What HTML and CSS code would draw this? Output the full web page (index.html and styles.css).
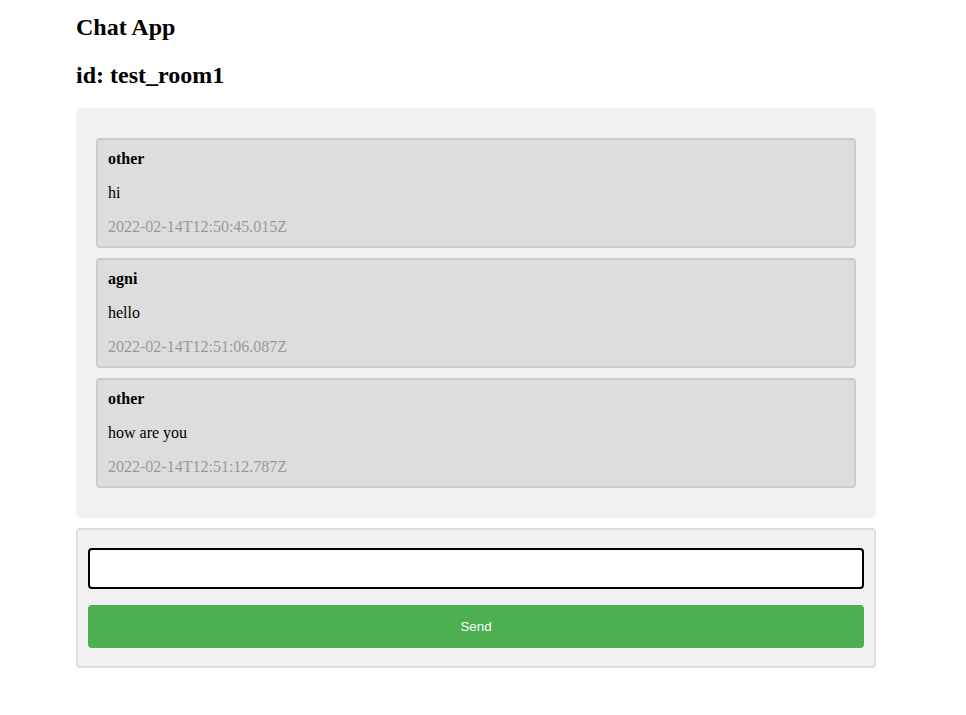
FILE: index.html
```html
<!DOCTYPE html>
<html>
<head>
<meta charset="utf-8">
<title>Chat App</title>
<link rel="stylesheet" href="styles.css">
</head>
<body>
<main class="app">
  <h2 class="title">Chat App</h2>
  <h2 class="room">id: test_room1</h2>
  <section class="chat">
    <div class="msg">
      <p class="user">other</p>
      <p class="text">hi</p>
      <p class="time">2022-02-14T12:50:45.015Z</p>
    </div>
    <div class="msg">
      <p class="user">agni</p>
      <p class="text">hello</p>
      <p class="time">2022-02-14T12:51:06.087Z</p>
    </div>
    <div class="msg">
      <p class="user">other</p>
      <p class="text">how are you</p>
      <p class="time">2022-02-14T12:51:12.787Z</p>
    </div>
  </section>
  <form class="compose">
    <input class="field" type="text" autofocus>
    <button class="send" type="button">Send</button>
  </form>
</main>
</body>
</html>
```
FILE: styles.css
```css
html, body {
  margin: 0;
  padding: 0;
  background: #fff;
}
body {
  font-family: "Liberation Serif", "Times New Roman", serif;
  font-size: 16px;
  color: #000;
}
.app {
  width: 800px;
  margin-left: 76px;
  padding-top: 1px;
}
.title, .room {
  font-size: 24px;
  font-weight: bold;
  margin: 0;
}
.title {
  margin-top: 13px;
  margin-bottom: 21px;
}
.room {
  margin-bottom: 19px;
}
.chat {
  background: #f1f1f1;
  border-radius: 5px;
  padding: 20px;
  display: flex;
  flex-direction: column;
  gap: 10px;
}
.msg {
  background: #dddddd;
  border: 2px solid #cccccc;
  border-radius: 4px;
  padding: 10px 10px;
  margin: 10px 0;
}
.msg + .msg {
  margin-top: 0;
}
.msg:not(:last-child) {
  margin-bottom: 0;
}
.msg p {
  margin: 0;
  line-height: 18px;
}
.msg p + p {
  margin-top: 16px;
}
.user {
  font-weight: bold;
}
.time {
  color: #999999;
}
.compose {
  margin-top: 10px;
  background: #f1f1f1;
  border: 2px solid #dddddd;
  border-radius: 4px;
  padding: 18px 10px 18px;
  display: flex;
  flex-direction: column;
  gap: 16px;
}
.field {
  box-sizing: border-box;
  height: 41px;
  border: 2px solid #000;
  border-radius: 4px;
  background: #fff;
  padding: 0 18px;
  font-size: 16px;
  outline: none;
  margin: 0;
  caret-color: #000;
}
.send {
  height: 43px;
  border: none;
  border-radius: 4px;
  background: #4caf50;
  color: #fff;
  font-family: "Liberation Sans", Arial, sans-serif;
  font-size: 13.33px;
  margin: 0;
  cursor: pointer;
}
```
